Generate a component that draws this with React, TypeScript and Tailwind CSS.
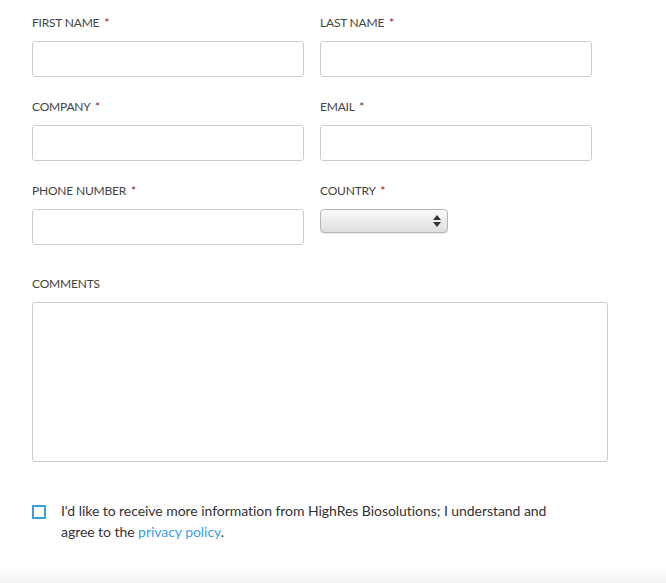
const font = { fontFamily: "Lato, 'Open Sans', sans-serif" };

function Label({ text }: { text: string }) {
  return (
    <label className="block h-4 text-[12px] leading-4 text-[#444] mb-[10px] tracking-[-0.2px]">
      {text} <span className="ml-[2px] text-[#8b1a1a]">*</span>
    </label>
  );
}

function Field({ label }: { label: string }) {
  return (
    <div className="w-[272px]">
      <Label text={label} />
      <input
        type="text"
        className="block w-[272px] h-9 rounded-[3px] border border-[#ccc] bg-white outline-none"
      />
    </div>
  );
}

export default function App() {
  return (
    <div className="relative w-[666px] h-[583px] bg-white overflow-hidden" style={font}>
      <div className="pl-8 pt-[15px]">
        <div className="flex flex-col gap-[22px]">
          <div className="flex gap-[16px]">
            <Field label="FIRST NAME" />
            <Field label="LAST NAME" />
          </div>
          <div className="flex gap-[16px]">
            <Field label="COMPANY" />
            <Field label="EMAIL" />
          </div>
          <div className="flex gap-[16px]">
            <Field label="PHONE NUMBER" />
            <div className="w-[272px]">
              <Label text="COUNTRY" />
              <div className="relative w-32 h-6 rounded-[4px] border border-[#b5b5b5] bg-gradient-to-b from-[#fafafa] to-[#dedede] shadow-[0_1px_1px_rgba(0,0,0,0.08)]">
                <div className="absolute right-[6px] top-[5px] flex flex-col items-center gap-[2px]">
                  <span className="block w-0 h-0 border-l-[4px] border-r-[4px] border-b-[5px] border-l-transparent border-r-transparent border-b-[#333]" />
                  <span className="block w-0 h-0 border-l-[4px] border-r-[4px] border-t-[5px] border-l-transparent border-r-transparent border-t-[#333]" />
                </div>
              </div>
            </div>
          </div>
        </div>

        <div className="mt-[31px]">
          <label className="block h-4 text-[12px] leading-4 text-[#444] mb-[10px] tracking-[-0.2px]">COMMENTS</label>
          <textarea className="block w-[576px] h-40 rounded-[3px] border border-[#ccc] bg-white resize-none outline-none" />
        </div>

        <div className="mt-[38px] flex items-start gap-[15px]">
          <span className="mt-[5px] block w-[14px] h-[14px] shrink-0 border-2 border-[#3a9fdf] bg-white" />
          <p className="text-[14px] leading-[21px] text-[#333] w-[500px] tracking-[-0.05px]">
            I'd like to receive more information from HighRes Biosolutions; I understand and agree to the{" "}
            <a className="text-[#3a9fdf]">privacy policy</a>.
          </p>
        </div>
      </div>
      <div className="absolute left-0 right-0 bottom-0 h-4 bg-gradient-to-b from-white to-[#f2f2f2]" />
    </div>
  );
}
